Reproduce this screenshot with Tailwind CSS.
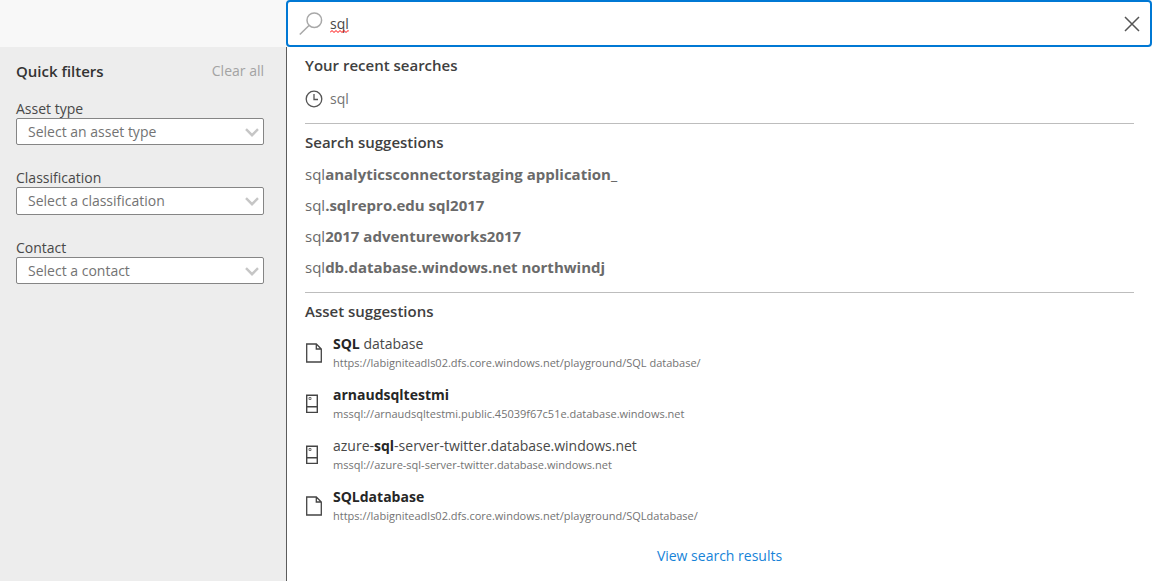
<!DOCTYPE html>
<html lang="en">
<head>
<meta charset="utf-8">
<meta name="viewport" content="width=device-width, initial-scale=1">
<title>Search</title>
<script src="https://cdn.jsdelivr.net/npm/@tailwindcss/browser@4"></script>
</head>
<body class="flex min-h-screen bg-white font-['Segoe_UI','Open_Sans',sans-serif] text-sm leading-5 text-[#484848]">
  <svg class="hidden" aria-hidden="true">
    <symbol id="file" viewBox="0 0 16 20"><path d="M.7 1h9.6l5 5v13H.7zM10.3 1v5h5" fill="none" stroke="#444" stroke-width="1.3"/></symbol>
    <symbol id="server" viewBox="0 0 12 20"><path d="M.7 1.2h10.6v17.2H.7zM.7 12.8h10.6" fill="none" stroke="#444" stroke-width="1.4"/><path d="M3 3.5h2v2H3z" fill="#fff" stroke="#555" stroke-width=".8"/></symbol>
    <symbol id="chevron" viewBox="0 0 14 9"><path d="M1 1.2l6 6 6-6" fill="none" stroke="#c6c6c6" stroke-width="2.4"/></symbol>
  </svg>

  <aside class="flex w-[286px] shrink-0 flex-col bg-[#ededed]">
    <div class="h-[47px] bg-[#f8f8f8]"></div>
    <div class="flex flex-col pb-4 pl-4 pr-[22px] pt-[14px]">
      <div class="flex items-center justify-between">
        <h2 class="text-[15px] font-semibold leading-5 text-[#333]">Quick filters</h2>
        <button type="button" class="leading-5 text-[#a3a3a3]">Clear all</button>
      </div>
      <form class="flex flex-col gap-6 pt-[18px]">
        <div class="flex flex-col">
          <label for="asset" class="leading-[19px]">Asset type</label>
          <div class="relative">
            <select id="asset" class="block h-[27px] w-full appearance-none rounded-xs border border-[#858585] bg-white pl-[11px] text-[#737373]"><option>Select an asset type</option></select>
            <svg class="pointer-events-none absolute right-[5px] top-[10px] h-[9px] w-[14px]"><use href="#chevron"/></svg>
          </div>
        </div>
        <div class="flex flex-col">
          <label for="classification" class="leading-[18px]">Classification</label>
          <div class="relative">
            <select id="classification" class="block h-7 w-full appearance-none rounded-xs border border-[#858585] bg-white pl-[11px] text-[#737373]"><option>Select a classification</option></select>
            <svg class="pointer-events-none absolute right-[5px] top-[10px] h-[9px] w-[14px]"><use href="#chevron"/></svg>
          </div>
        </div>
        <div class="flex flex-col">
          <label for="contact" class="leading-[18px]">Contact</label>
          <div class="relative">
            <select id="contact" class="block h-[27px] w-full appearance-none rounded-xs border border-[#858585] bg-white pl-[11px] text-[#737373]"><option>Select a contact</option></select>
            <svg class="pointer-events-none absolute right-[5px] top-[10px] h-[9px] w-[14px]"><use href="#chevron"/></svg>
          </div>
        </div>
      </form>
    </div>
  </aside>

  <main class="flex min-w-0 flex-1 flex-col">
    <div class="bg-[#f8f8f8]">
      <div class="flex h-[47px] items-center rounded-sm border-2 border-[#0078d4] bg-white pl-[11px] pr-[10px]">
        <svg class="size-6 shrink-0" viewBox="0 0 24 24" fill="none" stroke="#a8a8a8" stroke-width="1.5" aria-hidden="true"><circle cx="15.3" cy="8.2" r="7.3"/><path d="M10 13.5L.8 22.5"/></svg>
        <div class="relative ml-[7px] flex-1">
          <input type="text" aria-label="Search" value="sql" spellcheck="false" class="block w-full bg-transparent text-[#484848] outline-none">
          <svg class="pointer-events-none absolute bottom-[1px] left-0 h-[3px] w-[19px]" viewBox="0 0 19 3" fill="none" stroke="#f00" stroke-width="1" aria-hidden="true"><path d="M0 2.5l2-2 2 2 2-2 2 2 2-2 2 2 2-2 2 2 2-2 1 1"/></svg>
        </div>
        <button type="button" aria-label="Clear search" class="shrink-0"><svg class="size-4" viewBox="0 0 16 16" stroke="#555" stroke-width="1.5"><path d="M1 1l14 14M15 1L1 15"/></svg></button>
      </div>
    </div>

    <div class="flex-1 border-l border-[#5c5c5c] px-[18px] pb-2 pt-2">
      <section class="border-b border-[#bdbdbd] pb-[9px]">
        <h3 class="text-[15px] font-semibold leading-5 text-[#404040]">Your recent searches</h3>
        <a href="#" class="mt-2 flex h-[31px] items-center gap-[7px] text-[#737373]">
          <svg class="size-[18px]" viewBox="0 0 18 18" fill="none" stroke="#555" stroke-width="1.3" aria-hidden="true"><circle cx="9" cy="9" r="7.8"/><path d="M9 4v5.5h4"/></svg>
          <span>sql</span>
        </a>
      </section>

      <section class="border-b border-[#bdbdbd] pb-[9px] pt-2">
        <h3 class="text-[15px] font-semibold leading-5 text-[#404040]">Search suggestions</h3>
        <ul class="mt-[7px] text-[15px] leading-[31px] text-[#6a6a6a]">
          <li><a href="#">sql<b>analyticsconnectorstaging application_</b></a></li>
          <li><a href="#">sql<b>.sqlrepro.edu sql2017</b></a></li>
          <li><a href="#">sql<b>2017 adventureworks2017</b></a></li>
          <li><a href="#">sql<b>db.database.windows.net northwindj</b></a></li>
        </ul>
      </section>

      <section class="pt-2">
        <h3 class="text-[15px] font-semibold leading-5 text-[#404040]">Asset suggestions</h3>
        <ul class="mt-[13px]">
          <li><a href="#" class="flex h-[51px]">
            <span class="w-7 shrink-0 pt-[9px]"><svg class="ml-px h-5 w-4"><use href="#file"/></svg></span>
            <span><span class="block"><b class="text-[#262626]">SQL</b> database</span><span class="block text-[11px] leading-[18px] text-[#737373]">https://labigniteadls02.dfs.core.windows.net/playground/SQL database/</span></span>
          </a></li>
          <li><a href="#" class="flex h-[51px]">
            <span class="w-7 shrink-0 pt-[9px]"><svg class="ml-px h-5 w-3"><use href="#server"/></svg></span>
            <span><span class="block"><b class="text-[#262626]">arnaudsqltestmi</b></span><span class="block text-[11px] leading-[18px] text-[#737373]">mssql://arnaudsqltestmi.public.45039f67c51e.database.windows.net</span></span>
          </a></li>
          <li><a href="#" class="flex h-[51px]">
            <span class="w-7 shrink-0 pt-[9px]"><svg class="ml-px h-5 w-3"><use href="#server"/></svg></span>
            <span><span class="block">azure-<b class="text-[#262626]">sql</b>-server-twitter.database.windows.net</span><span class="block text-[11px] leading-[18px] text-[#737373]">mssql://azure-sql-server-twitter.database.windows.net</span></span>
          </a></li>
          <li><a href="#" class="flex h-[51px]">
            <span class="w-7 shrink-0 pt-[9px]"><svg class="ml-px h-5 w-4"><use href="#file"/></svg></span>
            <span><span class="block"><b class="text-[#262626]">SQLdatabase</b></span><span class="block text-[11px] leading-[18px] text-[#737373]">https://labigniteadls02.dfs.core.windows.net/playground/SQLdatabase/</span></span>
          </a></li>
        </ul>
        <div class="pt-2 text-center"><a href="#" class="text-[#1683d8]">View search results</a></div>
      </section>
    </div>
  </main>
</body>
</html>
